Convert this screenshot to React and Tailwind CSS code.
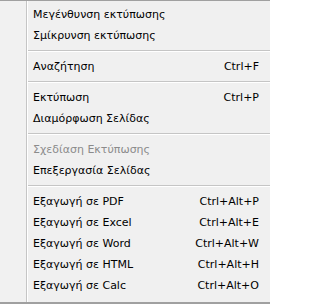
import React from "react";

const groups = [
  [
    { label: "Μεγένθυνση εκτύπωσης" },
    { label: "Σμίκρυνση εκτύπωσης" },
  ],
  [{ label: "Αναζήτηση", shortcut: "Ctrl+F" }],
  [
    { label: "Εκτύπωση", shortcut: "Ctrl+P" },
    { label: "Διαμόρφωση Σελίδας" },
  ],
  [
    { label: "Σχεδίαση Εκτύπωσης", disabled: true },
    { label: "Επεξεργασία Σελίδας" },
  ],
  [
    { label: "Εξαγωγή σε PDF", shortcut: "Ctrl+Alt+P" },
    { label: "Εξαγωγή σε Excel", shortcut: "Ctrl+Alt+E" },
    { label: "Εξαγωγή σε Word", shortcut: "Ctrl+Alt+W" },
    { label: "Εξαγωγή σε HTML", shortcut: "Ctrl+Alt+H" },
    { label: "Εξαγωγή σε Calc", shortcut: "Ctrl+Alt+O" },
  ],
];

const MenuItem = ({ label, shortcut, disabled }) => (
  <div
    className={`h-[21px] flex items-center justify-between pl-[5px] pr-[11px] whitespace-nowrap ${
      disabled ? "text-[#8b8b8b]" : "text-black"
    }`}
  >
    <span>{label}</span>
    {shortcut && <span>{shortcut}</span>}
  </div>
);

const Separator = () => (
  <div className="h-[10px] flex flex-col justify-center">
    <div className="h-px bg-[#c5c5c5]" />
    <div className="h-px bg-white" />
  </div>
);

const App = () => {
  return (
    <div
      className="w-[270px] h-[304px] bg-[#f0f0f0] border-t border-b-2 border-[#a0a0a0] flex text-[11px] leading-none"
      style={{ fontFamily: "'DejaVu Sans', Verdana, sans-serif" }}
    >
      <div className="w-[26px] bg-[#f1f1f1]" />
      <div className="w-px bg-[#c5c5c5]" />
      <div className="w-px bg-white" />
      <div className="flex-1 flex flex-col pt-[3px]">
        {groups.map((group, i) => (
          <React.Fragment key={i}>
            {i > 0 && <Separator />}
            {group.map((item) => (
              <MenuItem key={item.label} {...item} />
            ))}
          </React.Fragment>
        ))}
      </div>
    </div>
  );
};

export default App;
